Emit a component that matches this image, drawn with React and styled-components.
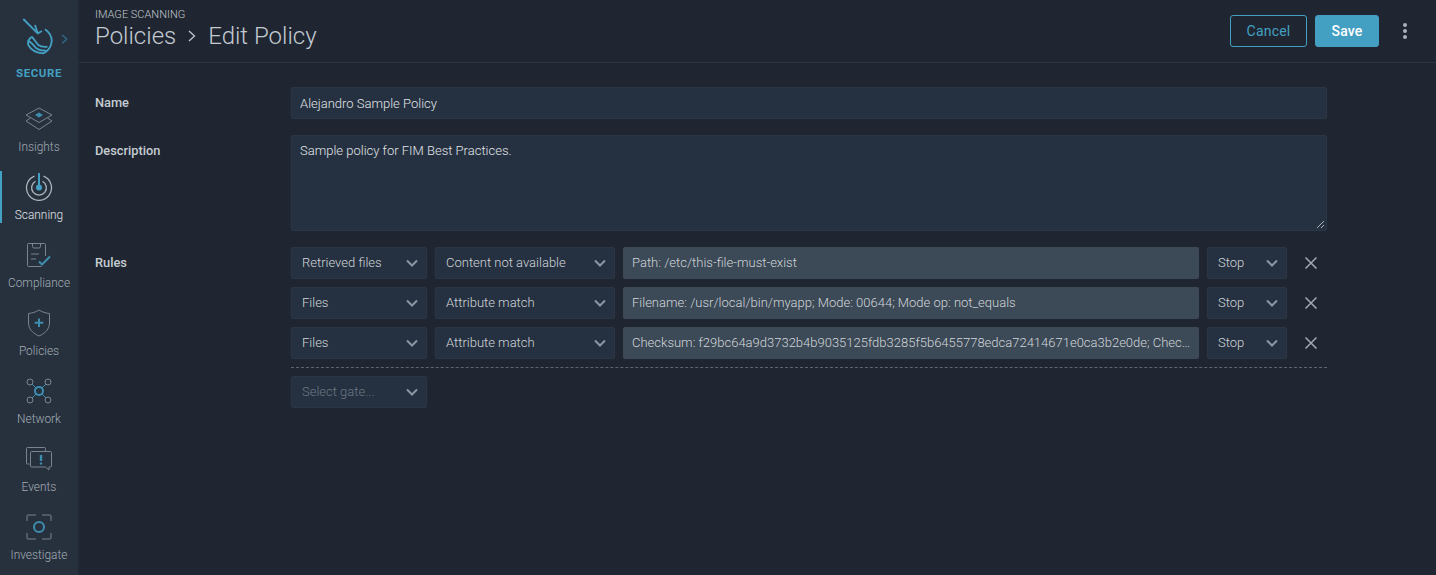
import React from 'react'
import styled, { createGlobalStyle } from 'styled-components'

const GlobalStyle = createGlobalStyle`
  html, body {
    margin: 0;
    padding: 0;
    height: 100%;
    background: #1f2631;
    overflow: hidden;
  }
  #root { height: 100%; }
  * { box-sizing: border-box; }
`

const Page = styled.div`
  display: flex;
  height: 575px;
  font-family: Roboto, "Liberation Sans", sans-serif;
  color: #c5ccd3;
`

const Sidebar = styled.nav`
  flex: 0 0 79px;
  display: flex;
  flex-direction: column;
  gap: 16px;
  background: #27313e;
  border-right: 1px solid #222a36;
`

const Brand = styled.div`
  height: 87px;
  display: flex;
  flex-direction: column;
  align-items: center;
`

const BrandName = styled.span`
  margin-top: 6px;
  font-size: 11.5px;
  line-height: 14px;
  font-weight: 700;
  letter-spacing: 0.6px;
  color: #44a0c2;
`

const NavItem = styled.a`
  height: 52px;
  display: flex;
  flex-direction: column;
  align-items: center;
  gap: 5px;
  font-size: 11.9px;
  font-weight: 300;
  line-height: 14px;
  color: ${p => (p.$active ? '#e0e4e8' : '#a3acb5')};
  border-left: 2px solid ${p => (p.$active ? '#44a0c2' : 'transparent')};
  padding-right: 2px;
`

const IconSlot = styled.span`
  height: 32px;
  display: flex;
  align-items: center;
  justify-content: center;
`

const Main = styled.main`
  flex: 1;
  min-width: 0;
`

const Header = styled.header`
  height: 63px;
  display: flex;
  align-items: flex-start;
  justify-content: space-between;
  padding: 8px 16px 0;
  border-bottom: 1px solid #2b3643;
`

const Eyebrow = styled.div`
  font-size: 11px;
  font-weight: 300;
  line-height: 13px;
  color: #c0c7ce;
`

const Crumbs = styled.h1`
  display: flex;
  align-items: center;
  gap: 12px;
  margin: 1px 0 0;
  font-size: 24px;
  line-height: 28px;
  font-weight: 300;
  color: #c3cad1;
`

const Actions = styled.div`
  display: flex;
  align-items: center;
  gap: 8px;
  padding-top: 7px;
`

const Button = styled.button`
  height: 32px;
  padding: 0;
  width: ${p => (p.$primary ? '64px' : '77px')};
  border-radius: 3px;
  border: 1px solid #44a0c2;
  background: ${p => (p.$primary ? '#44a0c2' : 'transparent')};
  color: ${p => (p.$primary ? '#ffffff' : '#44a0c2')};
  font-family: inherit;
  font-size: 14px;
  font-weight: ${p => (p.$primary ? 500 : 400)};
  letter-spacing: 0.2px;
`

const Dots = styled.div`
  display: flex;
  flex-direction: column;
  gap: 2px;
  width: 8px;
  align-items: center;
  margin: 0 11px 0 14px;
`

const Dot = styled.span`
  width: 4px;
  height: 4px;
  border-radius: 50%;
  background: #aab2bb;
`

const Form = styled.div`
  display: grid;
  grid-template-columns: 196px 1036px;
  row-gap: 16px;
  padding: 24px 16px;
`

const Label = styled.label`
  font-size: 12.8px;
  line-height: 32px;
  font-weight: 500;
  color: #c5ccd3;
`

const TextInput = styled.div`
  height: 32px;
  padding: 0 8px;
  font-size: 13px;
  font-weight: 300;
  line-height: 32px;
  color: #e0e4e8;
  background: #253140;
  border: 1px solid #2a3645;
  border-radius: 2px;
`

const TextArea = styled.div`
  position: relative;
  height: 96px;
  padding: 7px 8px;
  font-size: 13px;
  font-weight: 300;
  line-height: 16px;
  color: #e0e4e8;
  background: #253140;
  border: 1px solid #2a3645;
  border-radius: 2px;
`

const Grip = styled.svg`
  position: absolute;
  right: 1px;
  bottom: 1px;
`

const Rules = styled.div`
  display: flex;
  flex-direction: column;
  gap: 8px;
`

const RuleRow = styled.div`
  display: flex;
  align-items: center;
  gap: 8px;
`

const SelectBox = styled.div`
  flex: 0 0 ${p => p.$width}px;
  height: 32px;
  display: flex;
  align-items: center;
  justify-content: space-between;
  padding: 0 7px 0 10px;
  font-size: 13px;
  font-weight: 300;
  line-height: 28px;
  color: ${p => (p.$placeholder ? '#6c7884' : '#d0d5da')};
  background: #253140;
  border: 1px solid #2a3645;
  border-radius: 2px;
`

const SelectText = styled.span`
  display: block;
  margin-top: -1px;
`

const RuleValue = styled.div`
  flex: 1;
  min-width: 0;
  height: 32px;
  padding: 0 6px 0 9px;
  font-size: 13px;
  font-weight: 300;
  line-height: 31px;
  color: #d0d5da;
  background: #3c4956;
  border-radius: 2px;
  white-space: nowrap;
  overflow: hidden;
  text-overflow: ellipsis;
`

const Remove = styled.button`
  flex: 0 0 32px;
  height: 32px;
  padding: 0;
  display: flex;
  align-items: center;
  justify-content: center;
  background: none;
  border: 0;
`

const Divider = styled.div`
  border-top: 1px dashed #5a6672;
`

const AddRow = styled.div`
  display: flex;
`

const Chevron = () => (
  <svg width="14" height="10" viewBox="0 0 14 10" fill="none">
    <path d="M2 2.500 7 7.500 12 2.500" stroke="#8a96a1" strokeWidth="2" />
  </svg>
)

const CloseIcon = () => (
  <svg width="14" height="14" viewBox="0 0 14 14" fill="none">
    <path d="M1.500 1.500 12.500 12.500M12.500 1.500 1.500 12.500" stroke="#a2abb4" strokeWidth="1.500" />
  </svg>
)

const grey = '#79848f'
const blue = '#3d8eae'

const icons = {
  insights: (
    <svg width="30" height="24" viewBox="0 0 30 24" fill="none" stroke={grey} strokeWidth="1">
      <path d="M15 1 28 8 15 15.500 2 8Z" />
      <path d="M6.500 11 2 14 15 22.500 28 14 23.500 11" />
      <path d="M15 5.500 19 8 15 10.500 11 8Z" fill={blue} stroke="none" />
    </svg>
  ),
  scanning: (
    <svg width="28" height="28" viewBox="0 0 28 28" fill="none">
      <path d="M9.500 3.200A12.500 12.500 0 1 0 18.500 3.200" stroke="#aeb6bd" strokeWidth="1.300" />
      <path d="M10.500 8.200A7.400 7.400 0 1 0 17.500 8.200" stroke="#aeb6bd" strokeWidth="1.300" />
      <path d="M14 0V13" stroke="#44a0c2" strokeWidth="2" />
      <circle cx="14" cy="14.500" r="3" fill="#44a0c2" />
    </svg>
  ),
  compliance: (
    <svg width="26" height="24" viewBox="0 0 26 24" fill="none">
      <path d="M19.500 13V1.500a1 1 0 0 0-1-1H2.500a1 1 0 0 0-1 1v21a1 1 0 0 0 1 1h13" stroke={grey} />
      <path d="M6.500 1V3.500a1.500 1.500 0 0 0 1.500 1.500h5a1.500 1.500 0 0 0 1.500-1.500V1" stroke={grey} />
      <path d="M5 11H13M5 16H10" stroke={grey} />
      <path d="M13 18.500 16 21.500 24 13.500" stroke={blue} strokeWidth="2" />
    </svg>
  ),
  policies: (
    <svg width="24" height="28" viewBox="0 0 24 28" fill="none">
      <path d="M12 1C9 3 5 4.200 1.500 4.500V14C1.500 20 6 24.500 12 27 18 24.500 22.500 20 22.500 14V4.500C19 4.200 15 3 12 1Z" stroke={grey} />
      <path d="M12 9.500V18M7.700 13.700H16.300" stroke={blue} strokeWidth="2" />
    </svg>
  ),
  network: (
    <svg width="26" height="26" viewBox="0 0 26 26" fill="none">
      <path d="M6 6 10 10M20 6 16 10M6 20 10 16M20 20 16 16" stroke={blue} />
      <circle cx="4" cy="4" r="3" stroke={grey} />
      <circle cx="22" cy="4" r="3" stroke={grey} />
      <circle cx="4" cy="22" r="3" stroke={grey} />
      <circle cx="22" cy="22" r="3" stroke={grey} />
      <circle cx="13" cy="13" r="4" stroke={blue} strokeWidth="2" />
    </svg>
  ),
  events: (
    <svg width="28" height="26" viewBox="0 0 28 26" fill="none">
      <path d="M4.500 18H2.500a1 1 0 0 1-1-1V2.500a1 1 0 0 1 1-1h17a1 1 0 0 1 1 1V5" stroke={grey} />
      <path d="M6.500 5.500h19a1 1 0 0 1 1 1v13.500a1 1 0 0 1-1 1H24v3l-3.500-3H6.500a1 1 0 0 1-1-1V6.500a1 1 0 0 1 1-1Z" stroke={grey} />
      <path d="M16 9V15" stroke={blue} strokeWidth="2.400" />
      <circle cx="16" cy="17.500" r="1.200" fill={blue} />
    </svg>
  ),
  investigate: (
    <svg width="26" height="26" viewBox="0 0 26 26" fill="none">
      <path d="M1 7V2a1 1 0 0 1 1-1h8M16 1h8a1 1 0 0 1 1 1v5M25 19v5a1 1 0 0 1-1 1h-8M10 25H2a1 1 0 0 1-1-1v-5" stroke={grey} />
      <circle cx="13" cy="13" r="5" stroke={blue} strokeWidth="2" />
    </svg>
  ),
}

const navItems = [
  { key: 'insights', label: 'Insights' },
  { key: 'scanning', label: 'Scanning', active: true },
  { key: 'compliance', label: 'Compliance' },
  { key: 'policies', label: 'Policies' },
  { key: 'network', label: 'Network' },
  { key: 'events', label: 'Events' },
  { key: 'investigate', label: 'Investigate' },
]

const rules = [
  { gate: 'Retrieved files', trigger: 'Content not available', value: 'Path: /etc/this-file-must-exist' },
  { gate: 'Files', trigger: 'Attribute match', value: 'Filename: /usr/local/bin/myapp; Mode: 00644; Mode op: not_equals' },
  { gate: 'Files', trigger: 'Attribute match', value: 'Checksum: f29bc64a9d3732b4b9035125fdb3285f5b6455778edca72414671e0ca3b2e0de; Checksum algorithm: sha256' },
]

export default function App() {
  return (
    <Page>
      <GlobalStyle />
      <Sidebar>
        <Brand>
          <svg width="78" height="60" viewBox="0 0 78 60" fill="none" stroke="#44a0c2" strokeWidth="1.800">
            <path d="M23.300 19 37.700 33.300 42 31M35 25 37.700 33.300" />
            <path d="M45 29.300C49 32 52 37 51.700 41.700 51 47 47.500 51.500 43.300 53.300 37 53 31 50 28.300 45 27.500 42 28 39.500 31.700 36.700" />
            <path d="M27.500 41C31 41 33 45 36 48 39 50.500 42 51 46 50.500" />
            <path d="M31.700 36.700C34 39 36 42.500 38.300 45 41 47 44 47.300 47.500 46.700" />
            <path d="M62.300 35 66.700 39 62.300 43.300" stroke="#2f6a84" strokeWidth="1.500" />
          </svg>
          <BrandName>SECURE</BrandName>
        </Brand>
        {navItems.map(item => (
          <NavItem key={item.key} $active={item.active}>
            <IconSlot>{icons[item.key]}</IconSlot>
            {item.label}
          </NavItem>
        ))}
      </Sidebar>
      <Main>
        <Header>
          <div>
            <Eyebrow>IMAGE SCANNING</Eyebrow>
            <Crumbs>
              Policies
              <svg width="8" height="12" viewBox="0 0 8 12" fill="none">
                <path d="M1 1 6.500 6 1 11" stroke="#b9c1c9" strokeWidth="1.400" />
              </svg>
              <span>Edit Policy</span>
            </Crumbs>
          </div>
          <Actions>
            <Button>Cancel</Button>
            <Button $primary>Save</Button>
            <Dots>
              <Dot />
              <Dot />
              <Dot />
            </Dots>
          </Actions>
        </Header>
        <Form>
          <Label>Name</Label>
          <TextInput>Alejandro Sample Policy</TextInput>
          <Label>Description</Label>
          <TextArea>
            Sample policy for FIM Best Practices.
            <Grip width="9" height="9" viewBox="0 0 9 9" fill="none">
              <path d="M1 8 8 1M5 8 8 5" stroke="#aab2bb" strokeWidth="1" />
            </Grip>
          </TextArea>
          <Label>Rules</Label>
          <Rules>
            {rules.map(rule => (
              <RuleRow key={rule.value}>
                <SelectBox $width={136}><SelectText>{rule.gate}</SelectText><Chevron /></SelectBox>
                <SelectBox $width={180}><SelectText>{rule.trigger}</SelectText><Chevron /></SelectBox>
                <RuleValue>{rule.value}</RuleValue>
                <SelectBox $width={80}><SelectText>Stop</SelectText><Chevron /></SelectBox>
                <Remove><CloseIcon /></Remove>
              </RuleRow>
            ))}
            <Divider />
            <AddRow>
              <SelectBox $width={136} $placeholder><SelectText>Select gate...</SelectText><Chevron /></SelectBox>
            </AddRow>
          </Rules>
        </Form>
      </Main>
    </Page>
  )
}
